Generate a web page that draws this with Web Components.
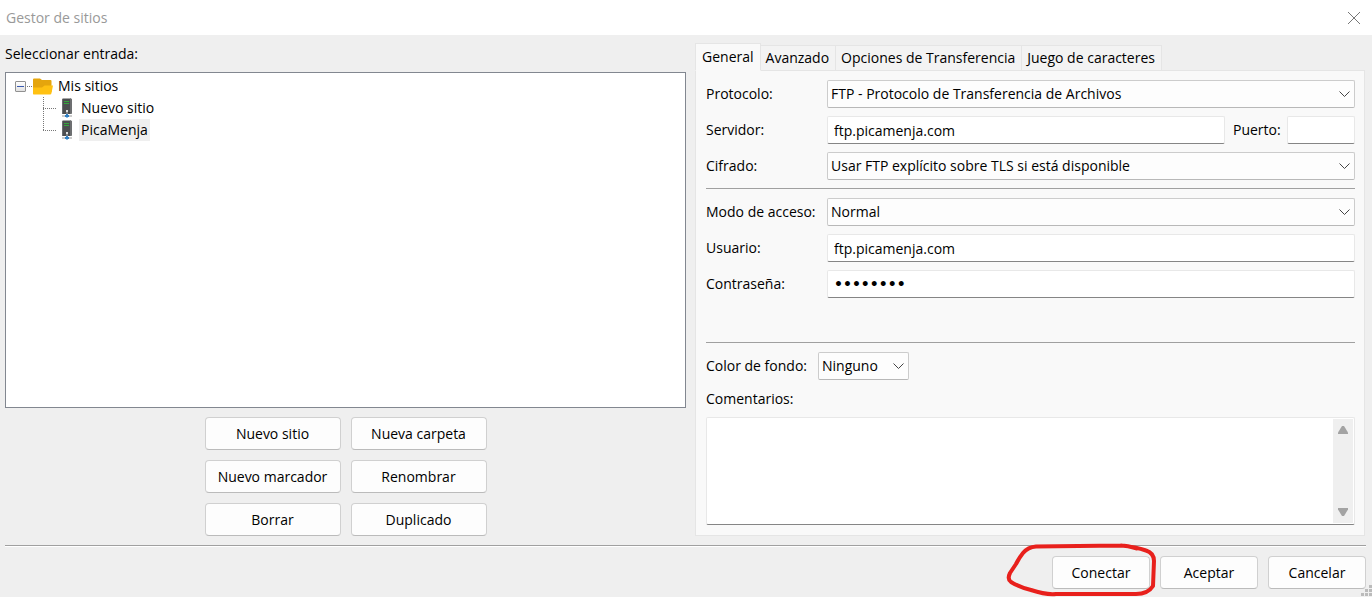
<!DOCTYPE html>
<html lang="es">
<head>
<meta charset="utf-8">
<title>Gestor de sitios</title>
<style>
  body {
    margin: 0;
    background: #efefef;
    color: #000;
    font: 14px/20px "Open Sans", "Noto Sans", sans-serif;
  }
</style>
</head>
<body>
<site-manager></site-manager>

<script>
const define = (name, html, setup) => {
  const template = document.createElement('template');
  template.innerHTML = `<style>*{box-sizing:border-box}[hidden]{display:none}</style>${html}`;
  customElements.define(name, class extends HTMLElement {
    constructor() {
      super();
      this.attachShadow({ mode: 'open' }).append(template.content.cloneNode(true));
    }
    connectedCallback() {
      if (setup && !this.ready) { this.ready = true; setup(this, this.shadowRoot); }
    }
  });
};

define('title-bar', `
  <style>
    :host { display: flex; justify-content: space-between; align-items: center; height: 35px; padding: 0 12px 0 6px; background: #fff; color: #999; }
    h1 { margin: 0; font: inherit; }
    button { display: flex; padding: 0; border: 0; background: none; color: #777; }
  </style>
  <h1><slot></slot></h1>
  <button type="button" aria-label="Cerrar"><svg width="12" height="12" viewBox="0 0 12 12" fill="none" stroke="currentColor"><path d="M0 0L12 12M12 0L0 12"/></svg></button>
`);

define('push-button', `
  <style>
    :host { display: block; }
    button { width: 100%; height: 33px; padding: 0; border: 1px solid #d0d0d0; border-bottom-color: #bbb; border-radius: 4px; background: #fdfdfd; color: inherit; font: inherit; }
  </style>
  <button type="button"><slot></slot></button>
`);

define('rule-line', `
  <style>:host { display: block; height: 1px; background: #a0a0a0; }</style>
`);

define('folder-icon', `
  <style>:host { display: flex; }</style>
  <svg width="20" height="17" viewBox="0 0 20 17">
    <path d="M0 1.500Q0 .5 1 .5H7L9 2H17.500Q18.500 2 18.500 3V14H0Z" fill="#e5a50d"/>
    <path d="M0 16V9.500H9L11.500 7.500H20L18.500 15Q18.300 16.500 17 16.500H.5Z" fill="#ffc112"/>
  </svg>
`);

define('server-icon', `
  <style>:host { display: flex; }</style>
  <svg width="12" height="20" viewBox="0 0 12 20">
    <path d="M1 1L2 .5H10L11 1.500V15L10 16H1Z" fill="#4c4e50"/>
    <path d="M9 .5H10L11 1.500V15L10 16H9Z" fill="#6d6f71"/>
    <path d="M1.500 1V16" stroke="#6a6c6e" fill="none"/>
    <path d="M3 3.500H8M3 5.500H8" stroke="#35a53c"/>
    <path d="M5 12H7V14H5Z" fill="#ddd"/>
    <path d="M6 14V17" stroke="#b7b7b7"/>
    <path d="M1 18H11" stroke="#999"/>
    <path d="M4 18H8M6 16V19.500" stroke="#2f7fc4" stroke-width="2"/>
  </svg>
`);

define('tree-leaf', `
  <style>
    :host { display: flex; align-items: center; height: 22px; }
    .branch { align-self: stretch; width: 13px; margin-right: 5px; display: grid; grid-template-rows: 11px 1fr; background: repeating-linear-gradient(#777 0 1px, transparent 1px 2px) 0 0 / 1px 100% no-repeat; }
    :host([last]) .branch { background-size: 1px 11px; }
    .branch::after { content: ""; grid-row: 2; height: 1px; background: repeating-linear-gradient(90deg, #777 0 1px, transparent 1px 2px); }
    .text { margin-left: 6px; padding: 1px 2px; }
    :host([selected]) .text { background: #efefef; }
  </style>
  <span class="branch"></span><server-icon></server-icon><span class="text"><slot></slot></span>
`, host => {
  host.setAttribute('role', 'treeitem');
  host.setAttribute('aria-selected', host.hasAttribute('selected'));
});

define('site-tree', `
  <style>
    :host { display: block; border: 1px solid #828790; background: #fff; padding: 2px 9px; }
    .root { display: flex; align-items: center; height: 22px; }
    .toggle { width: 11px; height: 11px; padding: 0; border: 1px solid #919191; border-radius: 1px; background: linear-gradient(#fff, #e2e2e2); display: flex; align-items: center; justify-content: center; }
    .toggle::after { content: ""; width: 7px; height: 1px; background: #3a5ab0; }
    .link { width: 7px; height: 1px; background: repeating-linear-gradient(90deg, transparent 0 1px, #777 1px 2px); }
    .name { padding-left: 5px; }
    .children { padding-left: 28px; }
  </style>
  <div class="root" role="treeitem" aria-expanded="true">
    <button class="toggle" type="button" aria-label="Contraer"></button><span class="link"></span><folder-icon></folder-icon><span class="name"></span>
  </div>
  <div class="children" role="group"><slot></slot></div>
`, (host, root) => {
  host.setAttribute('role', 'tree');
  root.querySelector('.name').textContent = host.getAttribute('name');
});

define('tab-item', `
  <style>
    :host { display: block; }
    button { height: 26px; padding: 0 6px 0 5px; border: 1px solid #e5e5e5; border-left-width: 0; background: #f3f3f3; color: inherit; font: inherit; white-space: nowrap; }
    :host([active]) button { height: 28px; padding: 0 6px; border-left-width: 1px; border-bottom-color: #f9f9f9; background: #f9f9f9; }
  </style>
  <button type="button" role="tab"><slot></slot></button>
`, (host, root) => root.querySelector('button').setAttribute('aria-selected', host.hasAttribute('active')));

define('tab-panel', `
  <style>
    :host { display: flex; flex-direction: column; }
    .tabs { display: flex; align-items: flex-end; z-index: 1; }
    .body { flex: 1; display: flex; flex-direction: column; margin-top: -1px; padding: 9px 9px 10px 10px; border: 1px solid #e5e5e5; background: #f9f9f9; }
  </style>
  <div class="tabs" role="tablist"><slot name="tab"></slot></div>
  <div class="body" role="tabpanel"><slot></slot></div>
`);

const fieldStyle = `
  <style>
    :host { display: flex; align-items: center; height: 28px; }
    label { flex: none; width: var(--label-width, 121px); white-space: nowrap; }
    input, select { width: 100%; height: 28px; margin: 0; color: inherit; font: inherit; outline: 0; }
    input { flex: 1; min-width: 0; padding: 0 6px; border: 1px solid #e8e8e8; border-bottom-color: #858585; border-radius: 2px; background: #fff; }
    input[type=password] { font-family: "DejaVu Sans", sans-serif; font-weight: bold; }
    .combo { flex: 1; display: grid; align-items: center; }
    .combo > * { grid-area: 1 / 1; }
    select { appearance: none; padding: 0 20px 0 3px; border: 1px solid #ccc; border-bottom-color: #b8b8b8; border-radius: 2px; background: #fdfdfd; }
    svg { justify-self: end; margin-right: 5px; pointer-events: none; }
  </style>`;

define('text-field', `${fieldStyle}
  <label for="control"></label><input id="control">
`, (host, root) => {
  const input = root.querySelector('input');
  root.querySelector('label').textContent = host.getAttribute('label');
  input.type = host.getAttribute('type') || 'text';
  input.value = host.getAttribute('value') || '';
});

define('select-field', `${fieldStyle}
  <label for="control"></label>
  <span class="combo">
    <select id="control"><option></option></select>
    <svg width="11" height="6" viewBox="0 0 11 6" fill="none" stroke="#444"><path d="M.5 .5L5.500 5.500L10.500 .5"/></svg>
  </span>
`, (host, root) => {
  root.querySelector('label').textContent = host.getAttribute('label');
  root.querySelector('option').textContent = host.getAttribute('value');
});

define('notes-field', `
  <style>
    :host { flex: 1; display: flex; flex-direction: column; }
    label { margin-bottom: 8px; }
    .box { flex: 1; display: flex; padding: 1px; border: 1px solid #e8e8e8; border-bottom-color: #858585; border-radius: 2px; background: #fff; }
    textarea { flex: 1; min-height: 80px; margin: 0; border: 0; outline: 0; resize: none; overflow: hidden; background: none; font: inherit; }
    .scroll { width: 20px; padding: 7px 0; display: flex; flex-direction: column; justify-content: space-between; align-items: center; background: #efefef; }
    .scroll svg { display: block; }
  </style>
  <label for="notes"></label>
  <div class="box">
    <textarea id="notes"></textarea>
    <div class="scroll" aria-hidden="true">
      <svg width="10" height="8" viewBox="0 0 10 8" fill="#a3a3a3"><path d="M4 0H6L10 6.500V8H0V6.500Z"/></svg>
      <svg width="10" height="8" viewBox="0 0 10 8" fill="#a3a3a3"><path d="M0 0H10V1.500L6 8H4L0 1.500Z"/></svg>
    </div>
  </div>
`, (host, root) => root.querySelector('label').textContent = host.getAttribute('label'));

define('pen-circle', `
  <style>
    :host { display: block; position: relative; }
    svg { position: absolute; left: -46px; top: -14px; pointer-events: none; }
  </style>
  <slot></slot>
  <svg width="152" height="55" viewBox="0 0 152 55" fill="none" stroke="#e8201c" stroke-width="4" stroke-linecap="round" stroke-linejoin="round">
    <path d="M131 6.500C126 5 121 3.500 115 3.500L30 4.500Q22 5 17 11Q13 16 10 22L4 31Q1 37 5 40Q13 45 25 48Q40 53 50 52H130Q142 52 147 44L148 19Q148 11 140 8.500Q130 5 115 3.500"/>
  </svg>
`);

define('dialog-footer', `
  <style>
    :host { display: block; padding: 0 6px 0 5px; position: relative; }
    .actions { display: grid; grid-template-columns: repeat(3, 98px); gap: 10px; justify-content: end; padding: 9px 0 8px; border-top: 1px solid #fff; }
    .grip { position: absolute; right: 0; bottom: 1px; }
  </style>
  <rule-line></rule-line>
  <div class="actions"><slot></slot></div>
  <svg class="grip" width="11" height="11" viewBox="0 0 11 11" fill="#bbb"><path d="M8 0h3v3h-3zM4 4h3v3h-3zM8 4h3v3h-3zM0 8h3v3h-3zM4 8h3v3h-3zM8 8h3v3h-3z"/></svg>
`);

define('site-manager', `
  <style>
    :host { display: flex; flex-direction: column; min-height: 100vh; }
    main { flex: 1; display: grid; grid-template-columns: 681fr 670fr; gap: 9px; padding: 8px 7px 9px 5px; }
    .entries { display: flex; flex-direction: column; }
    h2 { margin: 1px 0 8px; font: inherit; }
    site-tree { flex: 1; }
    .tools { display: grid; grid-template-columns: repeat(2, 136px); gap: 10px; justify-content: center; padding-top: 9px; }
    .group { display: grid; gap: 8px; }
    .server { display: grid; grid-template-columns: 1fr 122px; gap: 8px; }
    .port { --label-width: 54px; }
    rule-line { margin-bottom: 9px; }
    .connection { margin-bottom: 8px; }
    .login { margin-bottom: 44px; }
    .color { --label-width: 112px; width: 203px; margin-bottom: 9px; }
  </style>
  <title-bar>Gestor de sitios</title-bar>
  <main>
    <section class="entries">
      <h2>Seleccionar entrada:</h2>
      <site-tree name="Mis sitios">
        <tree-leaf>Nuevo sitio</tree-leaf>
        <tree-leaf selected last>PicaMenja</tree-leaf>
      </site-tree>
      <div class="tools">
        <push-button>Nuevo sitio</push-button>
        <push-button>Nueva carpeta</push-button>
        <push-button>Nuevo marcador</push-button>
        <push-button>Renombrar</push-button>
        <push-button>Borrar</push-button>
        <push-button>Duplicado</push-button>
      </div>
    </section>
    <tab-panel>
      <tab-item slot="tab" active>General</tab-item>
      <tab-item slot="tab">Avanzado</tab-item>
      <tab-item slot="tab">Opciones de Transferencia</tab-item>
      <tab-item slot="tab">Juego de caracteres</tab-item>
      <div class="group connection">
        <select-field label="Protocolo:" value="FTP - Protocolo de Transferencia de Archivos"></select-field>
        <div class="server">
          <text-field label="Servidor:" value="ftp.picamenja.com"></text-field>
          <text-field class="port" label="Puerto:"></text-field>
        </div>
        <select-field label="Cifrado:" value="Usar FTP explícito sobre TLS si está disponible"></select-field>
      </div>
      <rule-line></rule-line>
      <div class="group login">
        <select-field label="Modo de acceso:" value="Normal"></select-field>
        <text-field label="Usuario:" value="ftp.picamenja.com"></text-field>
        <text-field label="Contraseña:" type="password" value="contrase"></text-field>
      </div>
      <rule-line></rule-line>
      <select-field class="color" label="Color de fondo:" value="Ninguno"></select-field>
      <notes-field label="Comentarios:"></notes-field>
    </tab-panel>
  </main>
  <dialog-footer>
    <pen-circle><push-button>Conectar</push-button></pen-circle>
    <push-button>Aceptar</push-button>
    <push-button>Cancelar</push-button>
  </dialog-footer>
`);
</script>
</body>
</html>
